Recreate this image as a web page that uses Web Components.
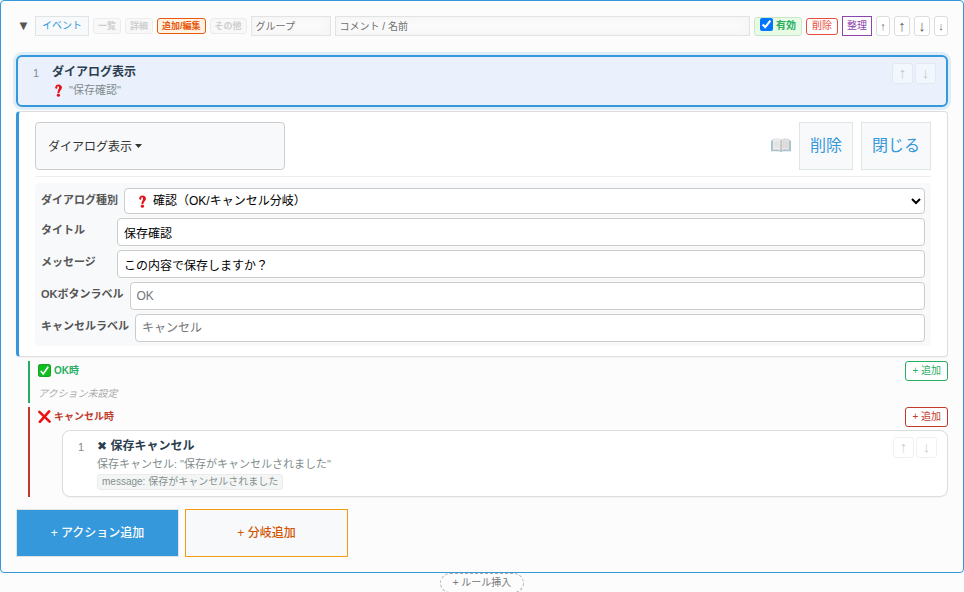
<!DOCTYPE html>
<html lang="ja">
<head>
<meta charset="utf-8">
<title>ルール編集</title>
<style>
  body { margin: 0; background: #fcfcfc; color: #2c3e50; font-family: "Liberation Sans", "Noto Sans CJK JP", "DejaVu Sans", sans-serif; font-size: 12px; line-height: 16px; }
</style>
</head>
<body>
<rule-editor></rule-editor>
<script>
const BASE = `
  * { box-sizing: border-box; }
  [hidden] { display: none; }
  button, input, select { font-family: inherit; margin: 0; }
  button { cursor: pointer; white-space: nowrap; }
`;

class BaseElement extends HTMLElement {
  connectedCallback() {
    if (this.shadowRoot) return;
    this.attachShadow({ mode: 'open' }).innerHTML = `<style>${BASE}${this.styles()}</style>${this.markup()}`;
  }
  attr(name, fallback = '') { return this.getAttribute(name) ?? fallback; }
  styles() { return ''; }
  markup() { return ''; }
}

/* Coloured pictograms */
const ICONS = {
  question: `<svg viewBox="0 0 12 12" width="13" height="13"><path d="M2.900 3.500C3 1.400 4.300.4 6 .4c1.900 0 3.200 1.200 3.200 2.900 0 2.300-2.200 2.700-2.400 4.900H5.100c-.2-2.500 1.400-3.200 1.400-4.700 0-.9-.4-1.400-1-1.400-.5 0-.7.3-.6.8.2.8-.2 1.400-.9 1.400-.7 0-1.100-.3-1.100-.8z" fill="#e3131b"/><circle cx="5.900" cy="10.300" r="1.500" fill="#e3131b"/></svg>`,
  check: `<svg viewBox="0 0 14 14" width="13" height="13"><rect x=".5" y=".5" width="13" height="13" rx="2" fill="#0fbf20" stroke="#0a9a17"/><path d="M3 7.600 5.600 10.700 11 3" fill="none" stroke="#fff" stroke-width="1.800"/></svg>`,
  cross: `<svg viewBox="0 0 14 14" width="13" height="13"><path d="M1.500 2 12.500 12.500M12 1.500 2 12.800" fill="none" stroke="#ee1111" stroke-width="2.800" stroke-linecap="round"/></svg>`,
  book: `<svg viewBox="0 0 22 18" width="20" height="18"><path d="M0 4h22v12h-9.500l-1.500 1-1.500-1H0z" fill="#a3c0d0"/><path d="M2 3C6 1.800 9 2 11 3.700v11.800C8.500 14 6 14 2 14.700z" fill="#efefef" stroke="#c4c4c4" stroke-width=".5"/><path d="M20 3C16 1.800 13 2 11 3.700v11.800c2.500-1.500 5-1.500 9-.8z" fill="#e3e3e3" stroke="#c0c0c0" stroke-width=".5"/><path d="M11 3.700v12" stroke="#aaa" stroke-width=".8"/><path d="M4.500 5v7M6.500 4.500v7.500M8.500 4.700v7.500M13.500 4.700v7.500M15.500 4.500v7.500M17.500 5v7" stroke="#d0d0d0" stroke-width=".7"/></svg>`
};
class PictoIcon extends BaseElement {
  styles() { return ':host{display:inline-flex;flex:none} svg{display:block}'; }
  markup() { return ICONS[this.attr('name')].replace('<svg', '<svg aria-hidden="true"'); }
}
customElements.define('picto-icon', PictoIcon);

/* Small outlined button; colours come in as variants */
class UiButton extends BaseElement {
  styles() { return `
    :host { display: flex; flex: none; }
    button { flex: 1; border: 1px solid #dfe4e4; background: #f8f9fb; color: #3498db; padding: 0 6px; height: 20px; font-size: 10px; line-height: 16px; border-radius: 0; }
    .tab { height: 16px; padding: 0 4px; font-size: 9px; line-height: 14px; border-radius: 3px; font-weight: bold; background: #f8f8f8; border-color: #ececec; color: #cfcfcf; }
    .tab.on { background: #fff3e6; border-color: #e8590c; color: #e8590c; }
    .danger { height: 17px; line-height: 14px; padding: 0 5px; border-color: #e74c3c; color: #e74c3c; background: #fff; border-radius: 3px; }
    .tidy { padding: 0 4px; background: #fff; border-color: #8e44ad; color: #8e44ad; }
    .move { width: 16px; padding: 0; border-radius: 3px; border-color: #ddd; background: #fff; color: #666; font-size: 15px; }
    .move.small { width: 14px; font-size: 11px; }
    .ghost { width: 21px; height: 21px; padding: 0 0 2px; border-radius: 3px; border-color: #ddd; background: #fff; color: #888; font-size: 15px; opacity: .4; }
    .large { height: 48px; padding: 0 10px; font-size: 16px; line-height: 24px; }
    .add-ok, .add-ng { background: #fff; border-radius: 3px; color: #27ae60; border-color: #27ae60; }
    .add-ng { color: #c0392b; border-color: #c0392b; }
    .primary, .branch { width: 163px; height: 48px; font-size: 12px; font-weight: 500; }
    .primary { background: #3498db; color: #fff; }
    .branch { color: #d35400; border-color: #f39c12; }
    .insert { height: 20px; padding: 0 12px; border: 1px dashed #aaa; border-radius: 10px; color: #777; background: #fcfcfc; }
  `; }
  markup() { const l = this.attr('label'); return `<button type="button" class="${this.attr('variant')}"${l ? ` aria-label="${l}"` : ''}><slot></slot></button>`; }
}
customElements.define('ui-button', UiButton);

class RuleHeader extends BaseElement {
  styles() { return `
    :host { display: flex; align-items: center; gap: 4px; height: 20px; }
    .toggle { border: 0; background: none; padding: 0; width: 15px; height: 16px; font-size: 13px; line-height: 16px; color: #555; }
    input[type=text] { height: 20px; border: 1px solid #e0e4e4; background: #fafafa; box-shadow: inset 0 0 8px #f2f2f2; padding: 0 4px; font-size: 10px; min-width: 0; border-radius: 0; color: #333; }
    input::placeholder { color: #6f6f6f; }
    .group { flex: 0 0 80px; } .comment { flex: 1; }
    .enabled { display: flex; align-items: center; gap: 3px; height: 19px; padding: 0 5px; border: 1px solid #c9e6cc; border-radius: 3px; background: #e8fbe4; color: #27ae60; font-size: 10px; font-weight: bold; white-space: nowrap; }
    .enabled input { width: 13px; height: 13px; align-self: flex-start; accent-color: #0075ff; }
  `; }
  markup() { return `
    <button class="toggle" type="button" aria-label="折りたたむ">▼</button>
    <ui-button>イベント</ui-button>
    <ui-button variant="tab">一覧</ui-button>
    <ui-button variant="tab">詳細</ui-button>
    <ui-button variant="tab on">追加/編集</ui-button>
    <ui-button variant="tab">その他</ui-button>
    <input class="group" type="text" placeholder="グループ" aria-label="グループ">
    <input class="comment" type="text" placeholder="コメント / 名前" aria-label="コメント / 名前">
    <label class="enabled"><input type="checkbox" checked>有効</label>
    <ui-button variant="danger">削除</ui-button>
    <ui-button variant="tidy">整理</ui-button>
    <ui-button variant="move small" label="先頭へ">↑</ui-button>
    <ui-button variant="move" label="上へ">↑</ui-button>
    <ui-button variant="move" label="下へ">↓</ui-button>
    <ui-button variant="move small" label="末尾へ">↓</ui-button>`; }
}
customElements.define('rule-header', RuleHeader);

/* Summary card of one action */
class ActionCard extends BaseElement {
  styles() { return `
    :host { display: flex; border: 1px solid #ddd; border-radius: 8px; background: #fff; padding: 6px 10px 6px 15px; box-shadow: 0 1px 2px rgba(0,0,0,.04); }
    :host([selected]) { border: 2px solid #3498db; border-radius: 6px; background: #eaf1fd; box-shadow: 0 0 0 3px rgba(52,152,219,.15); }
    .num { flex: 0 0 19px; color: #7f8c8d; font-size: 11px; line-height: 20px; }
    .body { flex: 1; min-width: 0; }
    .title { font-size: 12px; font-weight: bold; line-height: 18px; }
    .sub { display: flex; align-items: center; gap: 4px; font-size: 11px; line-height: 18px; color: #7f8c8d; }
    .moves { display: flex; gap: 2px; align-self: flex-start; }
  `; }
  markup() { return `
    <span class="num">${this.attr('num')}</span>
    <div class="body"><div class="title"><slot name="title"></slot></div><div class="sub"><slot></slot></div><slot name="tag"></slot></div>
    <div class="moves"><ui-button variant="ghost" label="上へ">↑</ui-button><ui-button variant="ghost" label="下へ">↓</ui-button></div>`; }
}
customElements.define('action-card', ActionCard);

class ParamTag extends BaseElement {
  styles() { return ':host{display:block;width:fit-content;margin-top:1px;padding:0 4px;border:1px solid #ececec;border-radius:3px;background:#f4f5f5;color:#84918f;font-size:10px;line-height:14px}'; }
  markup() { return '<slot></slot>'; }
}
customElements.define('param-tag', ParamTag);

/* Label with a text box, or with a drop-down when "option" is given */
class FormRow extends BaseElement {
  styles() {
    const q = encodeURIComponent(ICONS.question.replace('<svg', '<svg xmlns="http://www.w3.org/2000/svg"'));
    return `
    :host { display: flex; align-items: flex-start; gap: 6px; }
    label { flex: none; min-width: 70px; padding-top: 4px; font-size: 11px; font-weight: bold; line-height: 16px; color: #555; }
    input, select { flex: 1; min-width: 0; height: 28px; padding: 0 6px; border: 1px solid #ccc; border-radius: 4px; background-color: #fff; color: #000; font-size: 12px; }
    select { height: 26px; padding: 0 0 0 24px; background-image: url("data:image/svg+xml,${q}"); background-repeat: no-repeat; background-position: 11px center; }
    input::placeholder { color: #757575; }
  `; }
  markup() {
    const opt = this.attr('option');
    const field = opt ? `<select id="f"><option>${opt}</option></select>`
      : `<input id="f" type="text" value="${this.attr('value')}" placeholder="${this.attr('placeholder')}">`;
    return `<label for="f">${this.attr('label')}</label>${field}`;
  }
}
customElements.define('form-row', FormRow);

class ActionForm extends BaseElement {
  styles() { return `
    :host { display: block; padding: 10px 16px; background: #fff; border: 1px solid #ddd; border-left: 3px solid #3498db; border-radius: 4px; box-shadow: 0 1px 2px rgba(0,0,0,.04); }
    .bar { display: flex; align-items: center; gap: 8px; padding-bottom: 6px; border-bottom: 1px solid #eee; margin-bottom: 6px; }
    .type { width: 250px; height: 48px; padding: 0 12px 2px; display: flex; align-items: center; gap: 3px; border: 1px solid #ccc; border-radius: 4px; background: #f8f9fb; color: #333; font-size: 12px; }
    .type svg { display: block; padding-top: 2px; }
    .help { border: 0; background: none; padding: 0; margin-left: auto; }
    .fields { display: flex; flex-direction: column; gap: 4px; padding: 5px 6px 4px; border-radius: 4px; background: #f8f9fa; }
  `; }
  markup() { return `
    <div class="bar">
      <button class="type" type="button">ダイアログ表示<svg width="7" height="6" aria-hidden="true"><path d="M0 0h7L3.500 4z" fill="#333"/></svg></button>
      <button class="help" type="button" aria-label="ヘルプ"><picto-icon name="book"></picto-icon></button>
      <ui-button variant="large">削除</ui-button>
      <ui-button variant="large">閉じる</ui-button>
    </div>
    <div class="fields">
      <form-row label="ダイアログ種別" option="確認（OK/キャンセル分岐）"></form-row>
      <form-row label="タイトル" value="保存確認"></form-row>
      <form-row label="メッセージ" value="この内容で保存しますか？"></form-row>
      <form-row label="OKボタンラベル" placeholder="OK"></form-row>
      <form-row label="キャンセルラベル" placeholder="キャンセル"></form-row>
    </div>`; }
}
customElements.define('action-form', ActionForm);

class BranchBlock extends BaseElement {
  styles() { return `
    :host { display: block; margin-left: 12px; padding-left: 8px; border-left: 2px solid #27ae60; color: #27ae60; }
    :host([kind=ng]) { border-color: #c0392b; color: #c0392b; }
    header { display: flex; align-items: center; gap: 3px; font-size: 10px; font-weight: bold; height: 20px; }
    header ui-button { margin-left: auto; font-weight: normal; }
    picto-icon { padding-bottom: 2px; }
  `; }
  markup() {
    const ng = this.attr('kind') === 'ng';
    return `<header><picto-icon name="${ng ? 'cross' : 'check'}"></picto-icon><span>${this.attr('label')}</span><ui-button variant="${ng ? 'add-ng' : 'add-ok'}">+ 追加</ui-button></header><slot></slot>`;
  }
}
customElements.define('branch-block', BranchBlock);

class RuleEditor extends BaseElement {
  styles() { return `
    :host { display: block; }
    section { display: flex; flex-direction: column; gap: 4px; padding: 15px; border: 1px solid #3498db; border-radius: 4px; background: #fcfcfc; }
    rule-header { margin-bottom: 15px; }
    .empty { margin: 0; padding: 5px 0 1px; font-size: 10px; font-style: italic; color: #aaa; }
    .nested { margin: 3px 0 0 24px; color: #2c3e50; }
    .buttons { display: flex; gap: 6px; margin-top: 8px; }
    .insert { display: flex; justify-content: center; }
    [slot=title] { color: #2c3e50; }
  `; }
  markup() { return `
    <section>
      <rule-header></rule-header>
      <action-card num="1" selected><span slot="title">ダイアログ表示</span><picto-icon name="question"></picto-icon><span>"保存確認"</span></action-card>
      <action-form></action-form>
      <branch-block label="OK時"><p class="empty">アクション未設定</p></branch-block>
      <branch-block kind="ng" label="キャンセル時">
        <action-card class="nested" num="1"><span slot="title">✖ 保存キャンセル</span><span>保存キャンセル: "保存がキャンセルされました"</span><param-tag slot="tag">message: 保存がキャンセルされました</param-tag></action-card>
      </branch-block>
      <div class="buttons"><ui-button variant="primary">+ アクション追加</ui-button><ui-button variant="branch">+ 分岐追加</ui-button></div>
    </section>
    <div class="insert"><ui-button variant="insert">+ ルール挿入</ui-button></div>`; }
}
customElements.define('rule-editor', RuleEditor);
</script>
</body>
</html>
